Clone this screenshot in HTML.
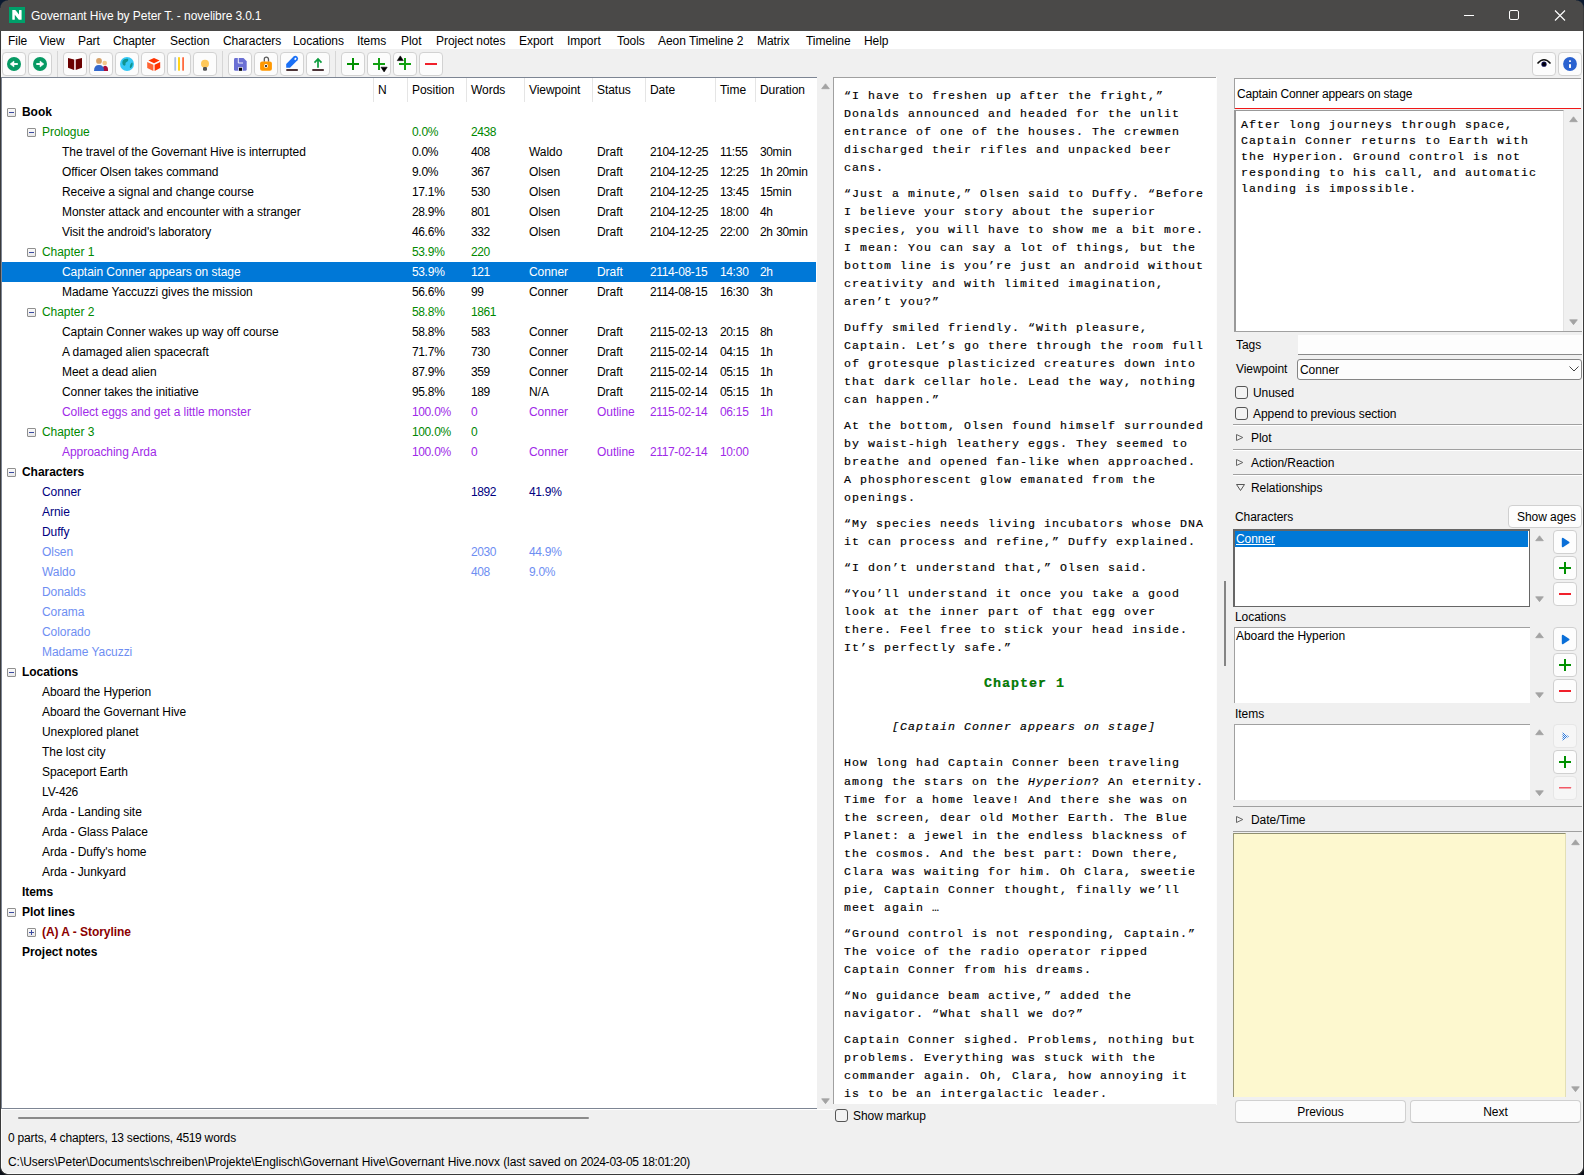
<!DOCTYPE html><html><head><meta charset="utf-8"><style>
*{margin:0;padding:0;box-sizing:border-box}
html,body{width:1584px;height:1175px;overflow:hidden;background:#f0f0f0}
body{position:relative;font-family:"Liberation Sans",sans-serif;font-size:12px;color:#000}
body>div{position:absolute}
.t{white-space:pre;letter-spacing:-0.05px}
.d{letter-spacing:-0.4px}
.m{font-family:"Liberation Mono",monospace;font-size:11.6px;letter-spacing:1.04px;white-space:pre;line-height:18px;-webkit-text-stroke:0.18px #000}
.btn{border:1px solid #d0d0d0;border-radius:4px;background:#fdfdfd}
</style></head><body><div style="left:0px;top:0px;width:1584px;height:31px;background:#4a4948"></div><svg style="position:absolute;left:9px;top:7px" width="16" height="16"><rect width="16" height="16" fill="#00a06a"/><path d="M3.3 3.1Q3.3 2.9 3.8 2.9H5.8Q6.3 2.9 6.6 3.3L10 7.6V3.4Q10 2.9 10.5 2.9H12.1Q12.6 2.9 12.6 3.4V12.2Q12.6 12.7 12.1 12.7H10.2Q9.8 12.7 9.4 12.2L5.8 7.8V12.2Q5.8 12.7 5.3 12.7H3.8Q3.3 12.7 3.3 12.2Z" fill="#fff"/></svg><div class="t" style="left:31px;top:8px;line-height:16px;color:#fff">Governant Hive by Peter T. - novelibre <span class="d">3</span>.<span class="d">0</span>.<span class="d">1</span></div><div style="left:1464px;top:15px;width:10px;height:1px;background:#fff"></div><div style="left:1509px;top:10px;width:10px;height:10px;border:1px solid #fff;border-radius:2px"></div><svg style="position:absolute;left:1554px;top:10px" width="12" height="11"><path d="M1 0.5L11 10.5M11 0.5L1 10.5" stroke="#fff" stroke-width="1.1"/></svg><div style="left:1px;top:31px;width:1582px;height:18px;background:#fff"></div><div class="t" style="left:8px;top:33px;line-height:16px;">File</div><div class="t" style="left:39px;top:33px;line-height:16px;">View</div><div class="t" style="left:78px;top:33px;line-height:16px;">Part</div><div class="t" style="left:113px;top:33px;line-height:16px;">Chapter</div><div class="t" style="left:170px;top:33px;line-height:16px;">Section</div><div class="t" style="left:223px;top:33px;line-height:16px;">Characters</div><div class="t" style="left:293px;top:33px;line-height:16px;">Locations</div><div class="t" style="left:357px;top:33px;line-height:16px;">Items</div><div class="t" style="left:401px;top:33px;line-height:16px;">Plot</div><div class="t" style="left:436px;top:33px;line-height:16px;">Project notes</div><div class="t" style="left:519px;top:33px;line-height:16px;">Export</div><div class="t" style="left:567px;top:33px;line-height:16px;">Import</div><div class="t" style="left:617px;top:33px;line-height:16px;">Tools</div><div class="t" style="left:658px;top:33px;line-height:16px;">Aeon Timeline <span class="d">2</span></div><div class="t" style="left:757px;top:33px;line-height:16px;">Matrix</div><div class="t" style="left:806px;top:33px;line-height:16px;">Timeline</div><div class="t" style="left:864px;top:33px;line-height:16px;">Help</div><div style="left:2px;top:52px;width:24px;height:24px;border:1px solid #d2d2d2;border-radius:4px;background:#fcfcfc"></div><div style="left:28px;top:52px;width:24px;height:24px;border:1px solid #d2d2d2;border-radius:4px;background:#fcfcfc"></div><div style="left:63px;top:52px;width:24px;height:24px;border:1px solid #d2d2d2;border-radius:4px;background:#fcfcfc"></div><div style="left:89px;top:52px;width:24px;height:24px;border:1px solid #d2d2d2;border-radius:4px;background:#fcfcfc"></div><div style="left:115px;top:52px;width:24px;height:24px;border:1px solid #d2d2d2;border-radius:4px;background:#fcfcfc"></div><div style="left:141px;top:52px;width:24px;height:24px;border:1px solid #d2d2d2;border-radius:4px;background:#fcfcfc"></div><div style="left:167px;top:52px;width:24px;height:24px;border:1px solid #d2d2d2;border-radius:4px;background:#fcfcfc"></div><div style="left:193px;top:52px;width:24px;height:24px;border:1px solid #d2d2d2;border-radius:4px;background:#fcfcfc"></div><div style="left:228px;top:52px;width:24px;height:24px;border:1px solid #d2d2d2;border-radius:4px;background:#fcfcfc"></div><div style="left:254px;top:52px;width:24px;height:24px;border:1px solid #d2d2d2;border-radius:4px;background:#fcfcfc"></div><div style="left:280px;top:52px;width:24px;height:24px;border:1px solid #d2d2d2;border-radius:4px;background:#fcfcfc"></div><div style="left:306px;top:52px;width:24px;height:24px;border:1px solid #d2d2d2;border-radius:4px;background:#fcfcfc"></div><div style="left:341px;top:52px;width:24px;height:24px;border:1px solid #d2d2d2;border-radius:4px;background:#fcfcfc"></div><div style="left:367px;top:52px;width:24px;height:24px;border:1px solid #d2d2d2;border-radius:4px;background:#fcfcfc"></div><div style="left:393px;top:52px;width:24px;height:24px;border:1px solid #d2d2d2;border-radius:4px;background:#fcfcfc"></div><div style="left:419px;top:52px;width:24px;height:24px;border:1px solid #d2d2d2;border-radius:4px;background:#fcfcfc"></div><div style="left:1532px;top:52px;width:24px;height:24px;border:1px solid #d2d2d2;border-radius:4px;background:#fcfcfc"></div><div style="left:1558px;top:52px;width:24px;height:24px;border:1px solid #d2d2d2;border-radius:4px;background:#fcfcfc"></div><div style="left:57px;top:51px;width:1px;height:26px;background:#d6d6d6"></div><div style="left:222px;top:51px;width:1px;height:26px;background:#d6d6d6"></div><div style="left:335px;top:51px;width:1px;height:26px;background:#d6d6d6"></div><svg style="position:absolute;left:6px;top:56px;" width="16" height="16" viewBox="0 0 16 16"><circle cx="8" cy="8" r="7" fill="#079a64"/><path d="M4.1 8L8 5V11Z" fill="#fff" stroke="#fff" stroke-width="0.5" stroke-linejoin="round"/><rect x="7.5" y="7" width="4.3" height="2" fill="#f0fff8"/></svg><svg style="position:absolute;left:32px;top:56px;" width="16" height="16" viewBox="0 0 16 16"><circle cx="8" cy="8" r="7" fill="#079a64"/><path d="M11.9 8L8 5V11Z" fill="#fff" stroke="#fff" stroke-width="0.5" stroke-linejoin="round"/><rect x="4.3" y="7" width="4.2" height="2" fill="#f0fff8"/></svg><svg style="position:absolute;left:66px;top:56px;" width="18" height="16" viewBox="0 0 18 16"><path d="M2 2L8 3.5V14L2 11.8Z" fill="#6b0000"/><path d="M9.6 3.5L16 2V11.8L9.6 14Z" fill="#6b0000"/><rect x="8" y="3.5" width="1.6" height="10.5" fill="#e8c8cc"/></svg><svg style="position:absolute;left:92px;top:56px;" width="18" height="16" viewBox="0 0 18 16"><circle cx="7" cy="4.9" r="2.9" fill="#d6a066"/><circle cx="12.7" cy="7" r="2.3" fill="#f3c88a"/><path d="M10.7 14.9V12.2Q11.3 9.8 13.3 9.8Q16 10.2 16 13.6V14.9Z" fill="#a80c38"/><path d="M2 14.9Q2 9 7 9Q12 9 12 14.9Z" fill="#3468cc"/></svg><svg style="position:absolute;left:119px;top:56px;" width="16" height="16" viewBox="0 0 16 16"><circle cx="8" cy="8" r="7" fill="#35c8f5"/><path d="M9 2.8C7 2.3 4.6 3 3.6 5C3 6.5 3.4 8.8 4.8 9.5C6 10 6.8 9 6.5 7.8C6.3 6.8 7.5 6.2 8.4 5.6C9.3 5 9.5 3.5 9 2.8Z" fill="#10948f"/><path d="M13.3 6.6C12.4 6.7 11.5 8.3 11 9.8C10.6 11.2 10.9 12.2 11.6 12.1C12.5 11.8 13.3 10.4 13.6 8.6C13.7 7.6 13.6 6.9 13.3 6.6Z" fill="#10948f"/></svg><svg style="position:absolute;left:146px;top:56px;" width="16" height="16" viewBox="0 0 16 16"><path d="M8 1.9L13.6 4.6L8 7.3L2.4 4.6Z" fill="#ff3300"/><path d="M1.2 5.9L7.4 8.7V14.9L1.2 12Z" fill="#ff6433"/><path d="M8.6 8.7L14.2 5.9V12L8.6 14.9Z" fill="#ff3300"/></svg><svg style="position:absolute;left:172px;top:56px;" width="16" height="16" viewBox="0 0 16 16"><rect x="2.3" y="1" width="1.8" height="13.8" rx="0.9" fill="#a9c0e2"/><rect x="6.1" y="1" width="1.8" height="13.8" rx="0.9" fill="#ffd000"/><rect x="10.2" y="1" width="1.8" height="13.8" rx="0.9" fill="#ff6a3e"/></svg><svg style="position:absolute;left:197px;top:56px;" width="16" height="16" viewBox="0 0 16 16"><circle cx="8" cy="7.8" r="4" fill="#ffc85a"/><rect x="6" y="11" width="4" height="3.8" rx="1.2" fill="#555"/></svg><svg style="position:absolute;left:232px;top:56px;" width="16" height="16" viewBox="0 0 16 16"><path d="M3.4 2H11.5L14.7 5.2V13.4Q14.7 14.8 13.3 14.8H3.4Q2 14.8 2 13.4V3.4Q2 2 3.4 2Z" fill="#6a6fd4"/><path d="M6.3 2V7H11" stroke="#fff" stroke-width="0.9" fill="none"/><rect x="6.4" y="11" width="4.2" height="3.8" fill="#fff"/><rect x="7" y="11.7" width="3" height="3.1" fill="#000"/></svg><svg style="position:absolute;left:258px;top:56px;" width="16" height="16" viewBox="0 0 16 16"><path d="M6.3 5.8V3.3A2.1 2.1 0 0 1 10.5 3.3V5.8" stroke="#5a5a5a" stroke-width="1.3" fill="none"/><rect x="2.1" y="5.4" width="11.8" height="9.3" rx="2" fill="#ff9800"/><circle cx="8" cy="9.9" r="1.9" fill="#fff"/><circle cx="8" cy="9.9" r="1" fill="#000"/></svg><svg style="position:absolute;left:284px;top:55px;" width="16" height="17" viewBox="0 0 16 17"><path d="M2.2 12.7V8.9L9.6 1.5Q11.5 0 13.3 1.8Q15 3.6 13.5 5.3L6 12.7Z" fill="#1a70f6"/><path d="M10.6 4.6L12.1 3.1" stroke="#fff" stroke-width="1.6"/><rect x="2.3" y="14.1" width="11.5" height="1.8" fill="#3a1e22"/></svg><svg style="position:absolute;left:310px;top:55px;" width="16" height="17" viewBox="0 0 16 17"><path d="M8 4V12.7M4.5 7.6L8 4L11.5 7.6" stroke="#0b9b3c" stroke-width="1.7" fill="none"/><rect x="2.3" y="14.1" width="11.5" height="1.8" fill="#3a1e22"/></svg><svg style="position:absolute;left:345px;top:56px;" width="16" height="16" viewBox="0 0 16 16"><rect x="2" y="7" width="12" height="2" fill="#009000"/><rect x="7" y="2" width="2" height="12" fill="#009000"/></svg><svg style="position:absolute;left:371px;top:56px;" width="18" height="17" viewBox="0 0 18 17"><rect x="2" y="7" width="12" height="2" fill="#11a011"/><rect x="7" y="2" width="2" height="12" fill="#11a011"/><path d="M10 11.2H16.2L13.1 15.9Z" fill="#000" stroke="#000" stroke-width="0.6" stroke-linejoin="round"/></svg><svg style="position:absolute;left:396px;top:54px;" width="18" height="18" viewBox="0 0 18 18"><path d="M1.3 6.6H7.3L4.3 1.9Z" fill="#000" stroke="#000" stroke-width="0.6" stroke-linejoin="round"/><rect x="3" y="9" width="12" height="2" fill="#11a011"/><rect x="8" y="4" width="2" height="12" fill="#11a011"/></svg><svg style="position:absolute;left:423px;top:56px;" width="16" height="16" viewBox="0 0 16 16"><rect x="2" y="7" width="12" height="2" fill="#f0202a"/></svg><svg style="position:absolute;left:1536px;top:56px;" width="16" height="16" viewBox="0 0 16 16"><path d="M1.5 7.5Q8 0 14.5 7.5" stroke="#111" stroke-width="1.5" fill="none"/><circle cx="8" cy="8.2" r="2.6" fill="#0a0a50"/><circle cx="8" cy="8.2" r="1.6" fill="#000"/></svg><svg style="position:absolute;left:1562px;top:56px;" width="16" height="16" viewBox="0 0 16 16"><circle cx="8" cy="8" r="6.9" fill="#2a62d0"/><rect x="7" y="4.4" width="2" height="1.5" fill="#fff"/><rect x="7" y="8.2" width="2" height="3.7" fill="#fff"/></svg><div style="left:1px;top:77px;width:816px;height:1032px;background:#fff;border-top:1px solid #7d8593;border-bottom:1px solid #7d8593;border-left:1px solid #7d8593"></div><div style="left:1px;top:1109px;width:832px;height:1px;background:#fff"></div><div style="left:0px;top:31px;width:1px;height:1144px;background:#3a3a3a"></div><div style="left:1px;top:1110px;width:1px;height:63px;background:#fafafa"></div><div style="left:1px;top:31px;width:1px;height:46px;background:#fafafa"></div><div class="t" style="left:378px;top:82px;line-height:16px;">N</div><div class="t" style="left:412px;top:82px;line-height:16px;">Position</div><div class="t" style="left:471px;top:82px;line-height:16px;">Words</div><div class="t" style="left:529px;top:82px;line-height:16px;">Viewpoint</div><div class="t" style="left:597px;top:82px;line-height:16px;">Status</div><div class="t" style="left:650px;top:82px;line-height:16px;">Date</div><div class="t" style="left:720px;top:82px;line-height:16px;">Time</div><div class="t" style="left:760px;top:82px;line-height:16px;">Duration</div><div style="left:373px;top:78px;width:1px;height:24px;background:#e5e5e5"></div><div style="left:407px;top:78px;width:1px;height:24px;background:#e5e5e5"></div><div style="left:466px;top:78px;width:1px;height:24px;background:#e5e5e5"></div><div style="left:524px;top:78px;width:1px;height:24px;background:#e5e5e5"></div><div style="left:592px;top:78px;width:1px;height:24px;background:#e5e5e5"></div><div style="left:645px;top:78px;width:1px;height:24px;background:#e5e5e5"></div><div style="left:715px;top:78px;width:1px;height:24px;background:#e5e5e5"></div><div style="left:755px;top:78px;width:1px;height:24px;background:#e5e5e5"></div><div style="left:7px;top:108px;width:9px;height:9px;border:1px solid #8f8f8f;border-radius:1px;background:linear-gradient(#fafafa,#e8e8e8)"></div><div style="left:9px;top:112px;width:5px;height:1px;background:#3a4aa0"></div><div class="t" style="left:22px;top:104px;line-height:16px;color:#000;font-weight:bold;">Book</div><div style="left:27px;top:128px;width:9px;height:9px;border:1px solid #8f8f8f;border-radius:1px;background:linear-gradient(#fafafa,#e8e8e8)"></div><div style="left:29px;top:132px;width:5px;height:1px;background:#3a4aa0"></div><div class="t" style="left:42px;top:124px;line-height:16px;color:#008800;">Prologue</div><div class="t" style="left:412px;top:124px;line-height:16px;color:#008800"><span class="d">0</span>.<span class="d">0</span>%</div><div class="t" style="left:471px;top:124px;line-height:16px;color:#008800"><span class="d">2438</span></div><div class="t" style="left:62px;top:144px;line-height:16px;color:#000;">The travel of the Governant Hive is interrupted</div><div class="t" style="left:412px;top:144px;line-height:16px;color:#000"><span class="d">0</span>.<span class="d">0</span>%</div><div class="t" style="left:471px;top:144px;line-height:16px;color:#000"><span class="d">408</span></div><div class="t" style="left:529px;top:144px;line-height:16px;color:#000">Waldo</div><div class="t" style="left:597px;top:144px;line-height:16px;color:#000">Draft</div><div class="t" style="left:650px;top:144px;line-height:16px;color:#000"><span class="d">2104</span>-<span class="d">12</span>-<span class="d">25</span></div><div class="t" style="left:720px;top:144px;line-height:16px;color:#000"><span class="d">11</span>:<span class="d">55</span></div><div class="t" style="left:760px;top:144px;line-height:16px;color:#000"><span class="d">30</span>min</div><div class="t" style="left:62px;top:164px;line-height:16px;color:#000;">Officer Olsen takes command</div><div class="t" style="left:412px;top:164px;line-height:16px;color:#000"><span class="d">9</span>.<span class="d">0</span>%</div><div class="t" style="left:471px;top:164px;line-height:16px;color:#000"><span class="d">367</span></div><div class="t" style="left:529px;top:164px;line-height:16px;color:#000">Olsen</div><div class="t" style="left:597px;top:164px;line-height:16px;color:#000">Draft</div><div class="t" style="left:650px;top:164px;line-height:16px;color:#000"><span class="d">2104</span>-<span class="d">12</span>-<span class="d">25</span></div><div class="t" style="left:720px;top:164px;line-height:16px;color:#000"><span class="d">12</span>:<span class="d">25</span></div><div class="t" style="left:760px;top:164px;line-height:16px;color:#000"><span class="d">1</span>h <span class="d">20</span>min</div><div class="t" style="left:62px;top:184px;line-height:16px;color:#000;">Receive a signal and change course</div><div class="t" style="left:412px;top:184px;line-height:16px;color:#000"><span class="d">17</span>.<span class="d">1</span>%</div><div class="t" style="left:471px;top:184px;line-height:16px;color:#000"><span class="d">530</span></div><div class="t" style="left:529px;top:184px;line-height:16px;color:#000">Olsen</div><div class="t" style="left:597px;top:184px;line-height:16px;color:#000">Draft</div><div class="t" style="left:650px;top:184px;line-height:16px;color:#000"><span class="d">2104</span>-<span class="d">12</span>-<span class="d">25</span></div><div class="t" style="left:720px;top:184px;line-height:16px;color:#000"><span class="d">13</span>:<span class="d">45</span></div><div class="t" style="left:760px;top:184px;line-height:16px;color:#000"><span class="d">15</span>min</div><div class="t" style="left:62px;top:204px;line-height:16px;color:#000;">Monster attack and encounter with a stranger</div><div class="t" style="left:412px;top:204px;line-height:16px;color:#000"><span class="d">28</span>.<span class="d">9</span>%</div><div class="t" style="left:471px;top:204px;line-height:16px;color:#000"><span class="d">801</span></div><div class="t" style="left:529px;top:204px;line-height:16px;color:#000">Olsen</div><div class="t" style="left:597px;top:204px;line-height:16px;color:#000">Draft</div><div class="t" style="left:650px;top:204px;line-height:16px;color:#000"><span class="d">2104</span>-<span class="d">12</span>-<span class="d">25</span></div><div class="t" style="left:720px;top:204px;line-height:16px;color:#000"><span class="d">18</span>:<span class="d">00</span></div><div class="t" style="left:760px;top:204px;line-height:16px;color:#000"><span class="d">4</span>h</div><div class="t" style="left:62px;top:224px;line-height:16px;color:#000;">Visit the android's laboratory</div><div class="t" style="left:412px;top:224px;line-height:16px;color:#000"><span class="d">46</span>.<span class="d">6</span>%</div><div class="t" style="left:471px;top:224px;line-height:16px;color:#000"><span class="d">332</span></div><div class="t" style="left:529px;top:224px;line-height:16px;color:#000">Olsen</div><div class="t" style="left:597px;top:224px;line-height:16px;color:#000">Draft</div><div class="t" style="left:650px;top:224px;line-height:16px;color:#000"><span class="d">2104</span>-<span class="d">12</span>-<span class="d">25</span></div><div class="t" style="left:720px;top:224px;line-height:16px;color:#000"><span class="d">22</span>:<span class="d">00</span></div><div class="t" style="left:760px;top:224px;line-height:16px;color:#000"><span class="d">2</span>h <span class="d">30</span>min</div><div style="left:27px;top:248px;width:9px;height:9px;border:1px solid #8f8f8f;border-radius:1px;background:linear-gradient(#fafafa,#e8e8e8)"></div><div style="left:29px;top:252px;width:5px;height:1px;background:#3a4aa0"></div><div class="t" style="left:42px;top:244px;line-height:16px;color:#008800;">Chapter <span class="d">1</span></div><div class="t" style="left:412px;top:244px;line-height:16px;color:#008800"><span class="d">53</span>.<span class="d">9</span>%</div><div class="t" style="left:471px;top:244px;line-height:16px;color:#008800"><span class="d">220</span></div><div style="left:2px;top:262px;width:814px;height:20px;background:#0078d7"></div><div class="t" style="left:62px;top:264px;line-height:16px;color:#fff;">Captain Conner appears on stage</div><div class="t" style="left:412px;top:264px;line-height:16px;color:#fff"><span class="d">53</span>.<span class="d">9</span>%</div><div class="t" style="left:471px;top:264px;line-height:16px;color:#fff"><span class="d">121</span></div><div class="t" style="left:529px;top:264px;line-height:16px;color:#fff">Conner</div><div class="t" style="left:597px;top:264px;line-height:16px;color:#fff">Draft</div><div class="t" style="left:650px;top:264px;line-height:16px;color:#fff"><span class="d">2114</span>-<span class="d">08</span>-<span class="d">15</span></div><div class="t" style="left:720px;top:264px;line-height:16px;color:#fff"><span class="d">14</span>:<span class="d">30</span></div><div class="t" style="left:760px;top:264px;line-height:16px;color:#fff"><span class="d">2</span>h</div><div class="t" style="left:62px;top:284px;line-height:16px;color:#000;">Madame Yaccuzzi gives the mission</div><div class="t" style="left:412px;top:284px;line-height:16px;color:#000"><span class="d">56</span>.<span class="d">6</span>%</div><div class="t" style="left:471px;top:284px;line-height:16px;color:#000"><span class="d">99</span></div><div class="t" style="left:529px;top:284px;line-height:16px;color:#000">Conner</div><div class="t" style="left:597px;top:284px;line-height:16px;color:#000">Draft</div><div class="t" style="left:650px;top:284px;line-height:16px;color:#000"><span class="d">2114</span>-<span class="d">08</span>-<span class="d">15</span></div><div class="t" style="left:720px;top:284px;line-height:16px;color:#000"><span class="d">16</span>:<span class="d">30</span></div><div class="t" style="left:760px;top:284px;line-height:16px;color:#000"><span class="d">3</span>h</div><div style="left:27px;top:308px;width:9px;height:9px;border:1px solid #8f8f8f;border-radius:1px;background:linear-gradient(#fafafa,#e8e8e8)"></div><div style="left:29px;top:312px;width:5px;height:1px;background:#3a4aa0"></div><div class="t" style="left:42px;top:304px;line-height:16px;color:#008800;">Chapter <span class="d">2</span></div><div class="t" style="left:412px;top:304px;line-height:16px;color:#008800"><span class="d">58</span>.<span class="d">8</span>%</div><div class="t" style="left:471px;top:304px;line-height:16px;color:#008800"><span class="d">1861</span></div><div class="t" style="left:62px;top:324px;line-height:16px;color:#000;">Captain Conner wakes up way off course</div><div class="t" style="left:412px;top:324px;line-height:16px;color:#000"><span class="d">58</span>.<span class="d">8</span>%</div><div class="t" style="left:471px;top:324px;line-height:16px;color:#000"><span class="d">583</span></div><div class="t" style="left:529px;top:324px;line-height:16px;color:#000">Conner</div><div class="t" style="left:597px;top:324px;line-height:16px;color:#000">Draft</div><div class="t" style="left:650px;top:324px;line-height:16px;color:#000"><span class="d">2115</span>-<span class="d">02</span>-<span class="d">13</span></div><div class="t" style="left:720px;top:324px;line-height:16px;color:#000"><span class="d">20</span>:<span class="d">15</span></div><div class="t" style="left:760px;top:324px;line-height:16px;color:#000"><span class="d">8</span>h</div><div class="t" style="left:62px;top:344px;line-height:16px;color:#000;">A damaged alien spacecraft</div><div class="t" style="left:412px;top:344px;line-height:16px;color:#000"><span class="d">71</span>.<span class="d">7</span>%</div><div class="t" style="left:471px;top:344px;line-height:16px;color:#000"><span class="d">730</span></div><div class="t" style="left:529px;top:344px;line-height:16px;color:#000">Conner</div><div class="t" style="left:597px;top:344px;line-height:16px;color:#000">Draft</div><div class="t" style="left:650px;top:344px;line-height:16px;color:#000"><span class="d">2115</span>-<span class="d">02</span>-<span class="d">14</span></div><div class="t" style="left:720px;top:344px;line-height:16px;color:#000"><span class="d">04</span>:<span class="d">15</span></div><div class="t" style="left:760px;top:344px;line-height:16px;color:#000"><span class="d">1</span>h</div><div class="t" style="left:62px;top:364px;line-height:16px;color:#000;">Meet a dead alien</div><div class="t" style="left:412px;top:364px;line-height:16px;color:#000"><span class="d">87</span>.<span class="d">9</span>%</div><div class="t" style="left:471px;top:364px;line-height:16px;color:#000"><span class="d">359</span></div><div class="t" style="left:529px;top:364px;line-height:16px;color:#000">Conner</div><div class="t" style="left:597px;top:364px;line-height:16px;color:#000">Draft</div><div class="t" style="left:650px;top:364px;line-height:16px;color:#000"><span class="d">2115</span>-<span class="d">02</span>-<span class="d">14</span></div><div class="t" style="left:720px;top:364px;line-height:16px;color:#000"><span class="d">05</span>:<span class="d">15</span></div><div class="t" style="left:760px;top:364px;line-height:16px;color:#000"><span class="d">1</span>h</div><div class="t" style="left:62px;top:384px;line-height:16px;color:#000;">Conner takes the initiative</div><div class="t" style="left:412px;top:384px;line-height:16px;color:#000"><span class="d">95</span>.<span class="d">8</span>%</div><div class="t" style="left:471px;top:384px;line-height:16px;color:#000"><span class="d">189</span></div><div class="t" style="left:529px;top:384px;line-height:16px;color:#000">N/A</div><div class="t" style="left:597px;top:384px;line-height:16px;color:#000">Draft</div><div class="t" style="left:650px;top:384px;line-height:16px;color:#000"><span class="d">2115</span>-<span class="d">02</span>-<span class="d">14</span></div><div class="t" style="left:720px;top:384px;line-height:16px;color:#000"><span class="d">05</span>:<span class="d">15</span></div><div class="t" style="left:760px;top:384px;line-height:16px;color:#000"><span class="d">1</span>h</div><div class="t" style="left:62px;top:404px;line-height:16px;color:#a02ae8;">Collect eggs and get a little monster</div><div class="t" style="left:412px;top:404px;line-height:16px;color:#a02ae8"><span class="d">100</span>.<span class="d">0</span>%</div><div class="t" style="left:471px;top:404px;line-height:16px;color:#a02ae8"><span class="d">0</span></div><div class="t" style="left:529px;top:404px;line-height:16px;color:#a02ae8">Conner</div><div class="t" style="left:597px;top:404px;line-height:16px;color:#a02ae8">Outline</div><div class="t" style="left:650px;top:404px;line-height:16px;color:#a02ae8"><span class="d">2115</span>-<span class="d">02</span>-<span class="d">14</span></div><div class="t" style="left:720px;top:404px;line-height:16px;color:#a02ae8"><span class="d">06</span>:<span class="d">15</span></div><div class="t" style="left:760px;top:404px;line-height:16px;color:#a02ae8"><span class="d">1</span>h</div><div style="left:27px;top:428px;width:9px;height:9px;border:1px solid #8f8f8f;border-radius:1px;background:linear-gradient(#fafafa,#e8e8e8)"></div><div style="left:29px;top:432px;width:5px;height:1px;background:#3a4aa0"></div><div class="t" style="left:42px;top:424px;line-height:16px;color:#008800;">Chapter <span class="d">3</span></div><div class="t" style="left:412px;top:424px;line-height:16px;color:#008800"><span class="d">100</span>.<span class="d">0</span>%</div><div class="t" style="left:471px;top:424px;line-height:16px;color:#008800"><span class="d">0</span></div><div class="t" style="left:62px;top:444px;line-height:16px;color:#a02ae8;">Approaching Arda</div><div class="t" style="left:412px;top:444px;line-height:16px;color:#a02ae8"><span class="d">100</span>.<span class="d">0</span>%</div><div class="t" style="left:471px;top:444px;line-height:16px;color:#a02ae8"><span class="d">0</span></div><div class="t" style="left:529px;top:444px;line-height:16px;color:#a02ae8">Conner</div><div class="t" style="left:597px;top:444px;line-height:16px;color:#a02ae8">Outline</div><div class="t" style="left:650px;top:444px;line-height:16px;color:#a02ae8"><span class="d">2117</span>-<span class="d">02</span>-<span class="d">14</span></div><div class="t" style="left:720px;top:444px;line-height:16px;color:#a02ae8"><span class="d">10</span>:<span class="d">00</span></div><div style="left:7px;top:468px;width:9px;height:9px;border:1px solid #8f8f8f;border-radius:1px;background:linear-gradient(#fafafa,#e8e8e8)"></div><div style="left:9px;top:472px;width:5px;height:1px;background:#3a4aa0"></div><div class="t" style="left:22px;top:464px;line-height:16px;color:#000;font-weight:bold;">Characters</div><div class="t" style="left:42px;top:484px;line-height:16px;color:#000080;">Conner</div><div class="t" style="left:471px;top:484px;line-height:16px;color:#000080"><span class="d">1892</span></div><div class="t" style="left:529px;top:484px;line-height:16px;color:#000080"><span class="d">41</span>.<span class="d">9</span>%</div><div class="t" style="left:42px;top:504px;line-height:16px;color:#000080;">Arnie</div><div class="t" style="left:42px;top:524px;line-height:16px;color:#000080;">Duffy</div><div class="t" style="left:42px;top:544px;line-height:16px;color:#6e8ef2;">Olsen</div><div class="t" style="left:471px;top:544px;line-height:16px;color:#6e8ef2"><span class="d">2030</span></div><div class="t" style="left:529px;top:544px;line-height:16px;color:#6e8ef2"><span class="d">44</span>.<span class="d">9</span>%</div><div class="t" style="left:42px;top:564px;line-height:16px;color:#6e8ef2;">Waldo</div><div class="t" style="left:471px;top:564px;line-height:16px;color:#6e8ef2"><span class="d">408</span></div><div class="t" style="left:529px;top:564px;line-height:16px;color:#6e8ef2"><span class="d">9</span>.<span class="d">0</span>%</div><div class="t" style="left:42px;top:584px;line-height:16px;color:#6e8ef2;">Donalds</div><div class="t" style="left:42px;top:604px;line-height:16px;color:#6e8ef2;">Corama</div><div class="t" style="left:42px;top:624px;line-height:16px;color:#6e8ef2;">Colorado</div><div class="t" style="left:42px;top:644px;line-height:16px;color:#6e8ef2;">Madame Yacuzzi</div><div style="left:7px;top:668px;width:9px;height:9px;border:1px solid #8f8f8f;border-radius:1px;background:linear-gradient(#fafafa,#e8e8e8)"></div><div style="left:9px;top:672px;width:5px;height:1px;background:#3a4aa0"></div><div class="t" style="left:22px;top:664px;line-height:16px;color:#000;font-weight:bold;">Locations</div><div class="t" style="left:42px;top:684px;line-height:16px;color:#000;">Aboard the Hyperion</div><div class="t" style="left:42px;top:704px;line-height:16px;color:#000;">Aboard the Governant Hive</div><div class="t" style="left:42px;top:724px;line-height:16px;color:#000;">Unexplored planet</div><div class="t" style="left:42px;top:744px;line-height:16px;color:#000;">The lost city</div><div class="t" style="left:42px;top:764px;line-height:16px;color:#000;">Spaceport Earth</div><div class="t" style="left:42px;top:784px;line-height:16px;color:#000;">LV-<span class="d">426</span></div><div class="t" style="left:42px;top:804px;line-height:16px;color:#000;">Arda - Landing site</div><div class="t" style="left:42px;top:824px;line-height:16px;color:#000;">Arda - Glass Palace</div><div class="t" style="left:42px;top:844px;line-height:16px;color:#000;">Arda - Duffy's home</div><div class="t" style="left:42px;top:864px;line-height:16px;color:#000;">Arda - Junkyard</div><div class="t" style="left:22px;top:884px;line-height:16px;color:#000;font-weight:bold;">Items</div><div style="left:7px;top:908px;width:9px;height:9px;border:1px solid #8f8f8f;border-radius:1px;background:linear-gradient(#fafafa,#e8e8e8)"></div><div style="left:9px;top:912px;width:5px;height:1px;background:#3a4aa0"></div><div class="t" style="left:22px;top:904px;line-height:16px;color:#000;font-weight:bold;">Plot lines</div><div style="left:27px;top:928px;width:9px;height:9px;border:1px solid #8f8f8f;border-radius:1px;background:linear-gradient(#fafafa,#e8e8e8)"></div><div style="left:29px;top:932px;width:5px;height:1px;background:#3a4aa0"></div><div style="left:31px;top:930px;width:1px;height:5px;background:#3a4aa0"></div><div class="t" style="left:42px;top:924px;line-height:16px;color:#8b0000;font-weight:bold;">(A) A - Storyline</div><div class="t" style="left:22px;top:944px;line-height:16px;color:#000;font-weight:bold;">Project notes</div><div style="left:18px;top:1117px;width:571px;height:2px;background:#8a8a8a;border-radius:1px"></div><div class="t" style="left:8px;top:1130px;line-height:16px;letter-spacing:-0.12px"><span class="d">0</span> parts, <span class="d">4</span> chapters, <span class="d">13</span> sections, <span class="d">4519</span> words</div><div class="t" style="left:8px;top:1154px;line-height:16px;">C:\Users\Peter\Documents\schreiben\Projekte\Englisch\Governant Hive\Governant Hive.novx (last saved on <span class="d">2024</span>-<span class="d">03</span>-<span class="d">05</span> <span class="d">18</span>:<span class="d">01</span>:<span class="d">20</span>)</div><div style="left:833px;top:77px;width:383px;height:1027px;background:#fff;border-left:1px solid #a0a0a0;border-top:1px solid #a0a0a0"></div><div style="left:1224px;top:581px;width:2px;height:85px;background:#858585"></div><div style="left:1216px;top:77px;width:1px;height:1028px;background:#fdfdfd"></div><div class="m" style="left:844px;top:87px;">“I have to freshen up after the fright,”</div><div class="m" style="left:844px;top:105px;">Donalds announced and headed for the unlit</div><div class="m" style="left:844px;top:123px;">entrance of one of the houses. The crewmen</div><div class="m" style="left:844px;top:141px;">discharged their rifles and unpacked beer</div><div class="m" style="left:844px;top:159px;">cans.</div><div class="m" style="left:844px;top:185px;">“Just a minute,” Olsen said to Duffy. “Before</div><div class="m" style="left:844px;top:203px;">I believe your story about the superior</div><div class="m" style="left:844px;top:221px;">species, you will have to show me a bit more.</div><div class="m" style="left:844px;top:239px;">I mean: You can say a lot of things, but the</div><div class="m" style="left:844px;top:257px;">bottom line is you’re just an android without</div><div class="m" style="left:844px;top:275px;">creativity and with limited imagination,</div><div class="m" style="left:844px;top:293px;">aren’t you?”</div><div class="m" style="left:844px;top:319px;">Duffy smiled friendly. “With pleasure,</div><div class="m" style="left:844px;top:337px;">Captain. Let’s go there through the room full</div><div class="m" style="left:844px;top:355px;">of grotesque plasticized creatures down into</div><div class="m" style="left:844px;top:373px;">that dark cellar hole. Lead the way, nothing</div><div class="m" style="left:844px;top:391px;">can happen.”</div><div class="m" style="left:844px;top:417px;">At the bottom, Olsen found himself surrounded</div><div class="m" style="left:844px;top:435px;">by waist-high leathery eggs. They seemed to</div><div class="m" style="left:844px;top:453px;">breathe and opened fan-like when approached.</div><div class="m" style="left:844px;top:471px;">A phosphorescent glow emanated from the</div><div class="m" style="left:844px;top:489px;">openings.</div><div class="m" style="left:844px;top:515px;">“My species needs living incubators whose DNA</div><div class="m" style="left:844px;top:533px;">it can process and refine,” Duffy explained.</div><div class="m" style="left:844px;top:559px;">“I don’t understand that,” Olsen said.</div><div class="m" style="left:844px;top:585px;">“You’ll understand it once you take a good</div><div class="m" style="left:844px;top:603px;">look at the inner part of that egg over</div><div class="m" style="left:844px;top:621px;">there. Feel free to stick your head inside.</div><div class="m" style="left:844px;top:639px;">It’s perfectly safe.”</div><div class="m" style="left:844px;top:754px;">How long had Captain Conner been traveling</div><div class="m" style="left:844px;top:773px;">among the stars on the <i>Hyperion</i>? An eternity.</div><div class="m" style="left:844px;top:791px;">Time for a home leave! And there she was on</div><div class="m" style="left:844px;top:809px;">the screen, dear old Mother Earth. The Blue</div><div class="m" style="left:844px;top:827px;">Planet: a jewel in the endless blackness of</div><div class="m" style="left:844px;top:845px;">the cosmos. And the best part: Down there,</div><div class="m" style="left:844px;top:863px;">Clara was waiting for him. Oh Clara, sweetie</div><div class="m" style="left:844px;top:881px;">pie, Captain Conner thought, finally we’ll</div><div class="m" style="left:844px;top:899px;">meet again …</div><div class="m" style="left:844px;top:925px;">“Ground control is not responding, Captain.”</div><div class="m" style="left:844px;top:943px;">The voice of the radio operator ripped</div><div class="m" style="left:844px;top:961px;">Captain Conner from his dreams.</div><div class="m" style="left:844px;top:987px;">“No guidance beam active,” added the</div><div class="m" style="left:844px;top:1005px;">navigator. “What shall we do?”</div><div class="m" style="left:844px;top:1031px;">Captain Conner sighed. Problems, nothing but</div><div class="m" style="left:844px;top:1049px;">problems. Everything was stuck with the</div><div class="m" style="left:844px;top:1067px;">commander again. Oh, Clara, how annoying it</div><div class="m" style="left:844px;top:1085px;">is to be an intergalactic leader.</div><div class="m" style="left:984px;top:675px;color:#008800;font-weight:bold;font-size:13.33px;letter-spacing:1px">Chapter 1</div><div class="m" style="left:892px;top:718px;font-style:italic">[Captain Conner appears on stage]</div><div style="left:835px;top:1109px;width:13px;height:13px;border:1px solid #555;border-radius:3px;background:#f3f3f3"></div><div class="t" style="left:853px;top:1108px;line-height:16px;">Show markup</div><div style="left:1234px;top:78px;width:347px;height:31px;background:#fff;border-left:1px solid #a0a0a0;border-top:1px solid #a0a0a0"></div><div class="t" style="left:1237px;top:86px;line-height:16px;letter-spacing:-0.16px">Captain Conner appears on stage</div><div style="left:1235px;top:108px;width:346px;height:1px;background:#f01818"></div><div style="left:1234px;top:110px;width:330px;height:222px;background:#fff;border-left:2px solid #999;border-top:1px solid #999;border-right:1px solid #e3e3e3;border-bottom:1px solid #e3e3e3"></div><div style="left:1234px;top:331px;width:348px;height:1px;background:#a0a0a0"></div><div class="m" style="left:1241px;top:116px;line-height:18px">After long journeys through space,</div><div class="m" style="left:1241px;top:132px;line-height:18px">Captain Conner returns to Earth with</div><div class="m" style="left:1241px;top:148px;line-height:18px">the Hyperion. Ground control is not</div><div class="m" style="left:1241px;top:164px;line-height:18px">responding to his call, and automatic</div><div class="m" style="left:1241px;top:180px;line-height:18px">landing is impossible.</div><svg style="position:absolute;left:1568.5px;top:116px" width="9" height="7"><path d="M4.5 0.8L8.3 5.7H0.7Z" fill="#a3a3a3" stroke="#a3a3a3" stroke-width="0.8" stroke-linejoin="round"/></svg><svg style="position:absolute;left:1568.5px;top:319px" width="9" height="7"><path d="M0.7 0.8H8.3L4.5 5.7Z" fill="#a3a3a3" stroke="#a3a3a3" stroke-width="0.8" stroke-linejoin="round"/></svg><svg style="position:absolute;left:820.5px;top:83px" width="9" height="7"><path d="M4.5 0.8L8.3 5.7H0.7Z" fill="#a3a3a3" stroke="#a3a3a3" stroke-width="0.8" stroke-linejoin="round"/></svg><svg style="position:absolute;left:820.5px;top:1098px" width="9" height="7"><path d="M0.7 0.8H8.3L4.5 5.7Z" fill="#a3a3a3" stroke="#a3a3a3" stroke-width="0.8" stroke-linejoin="round"/></svg><div class="t" style="left:1236px;top:337px;line-height:16px;">Tags</div><div style="left:1298px;top:335px;width:284px;height:20px;background:#fdfdfd;border-bottom:1px solid #8a8a8a"></div><div class="t" style="left:1236px;top:361px;line-height:16px;">Viewpoint</div><div style="left:1297px;top:359px;width:285px;height:21px;background:#fdfdfd;border:1px solid #858585;border-radius:3px"></div><div class="t" style="left:1300px;top:362px;line-height:16px;">Conner</div><svg style="position:absolute;left:1569px;top:366px" width="11" height="7"><path d="M0.5 0.5L5 5L9.5 0.5" stroke="#444" fill="none" stroke-width="1"/></svg><div style="left:1235px;top:386px;width:13px;height:13px;border:1px solid #555;border-radius:3px;background:#f3f3f3"></div><div class="t" style="left:1253px;top:385px;line-height:16px;">Unused</div><div style="left:1235px;top:407px;width:13px;height:13px;border:1px solid #555;border-radius:3px;background:#f3f3f3"></div><div class="t" style="left:1253px;top:406px;line-height:16px;">Append to previous section</div><div style="left:1233px;top:424px;width:349px;height:1px;background:#a0a0a0"></div><div style="left:1233px;top:425px;width:349px;height:1px;background:#fff"></div><div style="left:1233px;top:449px;width:349px;height:1px;background:#a0a0a0"></div><div style="left:1233px;top:450px;width:349px;height:1px;background:#fff"></div><div style="left:1233px;top:474px;width:349px;height:1px;background:#a0a0a0"></div><div style="left:1233px;top:475px;width:349px;height:1px;background:#fff"></div><svg style="position:absolute;left:1236px;top:434px" width="8" height="8"><path d="M0.5 0.5L6.8 3.5L0.5 6.5Z" stroke="#666" fill="none" stroke-width="1"/></svg><div class="t" style="left:1251px;top:430px;line-height:16px;">Plot</div><svg style="position:absolute;left:1236px;top:459px" width="8" height="8"><path d="M0.5 0.5L6.8 3.5L0.5 6.5Z" stroke="#666" fill="none" stroke-width="1"/></svg><div class="t" style="left:1251px;top:455px;line-height:16px;">Action/Reaction</div><svg style="position:absolute;left:1236px;top:484px" width="9" height="8"><path d="M0.5 0.5H8.5L4.5 6.5Z" stroke="#555" fill="none" stroke-width="1"/></svg><div class="t" style="left:1251px;top:480px;line-height:16px;">Relationships</div><div class="t" style="left:1235px;top:509px;line-height:16px;">Characters</div><div style="left:1508px;top:505px;width:74px;height:23px;border:1px solid #d0d0d0;border-radius:4px;background:#fdfdfd"></div><div class="t" style="left:1517px;top:509px;line-height:16px;">Show ages</div><div style="left:1233px;top:529px;width:297px;height:78px;background:#fff;border:2px solid #666;border-right-width:1px;border-bottom-width:1px"></div><div style="left:1235px;top:531px;width:293px;height:16px;background:#0078d7"></div><div class="t" style="left:1236px;top:531px;line-height:16px;color:#fff;text-decoration:underline">Conner</div><svg style="position:absolute;left:1534.5px;top:535px" width="9" height="7"><path d="M4.5 0.8L8.3 5.7H0.7Z" fill="#a3a3a3" stroke="#a3a3a3" stroke-width="0.8" stroke-linejoin="round"/></svg><svg style="position:absolute;left:1534.5px;top:596px" width="9" height="7"><path d="M0.7 0.8H8.3L4.5 5.7Z" fill="#a3a3a3" stroke="#a3a3a3" stroke-width="0.8" stroke-linejoin="round"/></svg><div style="left:1553px;top:530px;width:24px;height:24px;border:1px solid #d0d0d0;border-radius:4px;background:#fdfdfd;"></div><svg style="position:absolute;left:1561px;top:537px;" width="9" height="11"><path d="M1.8 1.8L7.5 5.5L1.8 9.2Z" fill="#0a6fd8" stroke="#0a6fd8" stroke-linejoin="round" stroke-width="2"/></svg><div style="left:1553px;top:556px;width:24px;height:24px;border:1px solid #d0d0d0;border-radius:4px;background:#fdfdfd;"></div><div style="left:1559px;top:567px;width:12px;height:2px;background:#009000"></div><div style="left:1564px;top:562px;width:2px;height:12px;background:#009000"></div><div style="left:1553px;top:582px;width:24px;height:24px;border:1px solid #d0d0d0;border-radius:4px;background:#fdfdfd;"></div><div style="left:1559px;top:593px;width:12px;height:2px;background:#f0202a;"></div><div class="t" style="left:1235px;top:609px;line-height:16px;">Locations</div><div style="left:1234px;top:627px;width:296px;height:76px;background:#fff;border-left:1px solid #a0a0a0;border-top:1px solid #a0a0a0"></div><div class="t" style="left:1236px;top:628px;line-height:16px;">Aboard the Hyperion</div><svg style="position:absolute;left:1534.5px;top:632px" width="9" height="7"><path d="M4.5 0.8L8.3 5.7H0.7Z" fill="#a3a3a3" stroke="#a3a3a3" stroke-width="0.8" stroke-linejoin="round"/></svg><svg style="position:absolute;left:1534.5px;top:692px" width="9" height="7"><path d="M0.7 0.8H8.3L4.5 5.7Z" fill="#a3a3a3" stroke="#a3a3a3" stroke-width="0.8" stroke-linejoin="round"/></svg><div style="left:1553px;top:627px;width:24px;height:24px;border:1px solid #d0d0d0;border-radius:4px;background:#fdfdfd;"></div><svg style="position:absolute;left:1561px;top:634px;" width="9" height="11"><path d="M1.8 1.8L7.5 5.5L1.8 9.2Z" fill="#0a6fd8" stroke="#0a6fd8" stroke-linejoin="round" stroke-width="2"/></svg><div style="left:1553px;top:653px;width:24px;height:24px;border:1px solid #d0d0d0;border-radius:4px;background:#fdfdfd;"></div><div style="left:1559px;top:664px;width:12px;height:2px;background:#009000"></div><div style="left:1564px;top:659px;width:2px;height:12px;background:#009000"></div><div style="left:1553px;top:679px;width:24px;height:24px;border:1px solid #d0d0d0;border-radius:4px;background:#fdfdfd;"></div><div style="left:1559px;top:690px;width:12px;height:2px;background:#f0202a;"></div><div class="t" style="left:1235px;top:706px;line-height:16px;">Items</div><div style="left:1234px;top:724px;width:296px;height:76px;background:#fff;border-left:1px solid #a0a0a0;border-top:1px solid #a0a0a0"></div><svg style="position:absolute;left:1534.5px;top:729px" width="9" height="7"><path d="M4.5 0.8L8.3 5.7H0.7Z" fill="#a3a3a3" stroke="#a3a3a3" stroke-width="0.8" stroke-linejoin="round"/></svg><svg style="position:absolute;left:1534.5px;top:790px" width="9" height="7"><path d="M0.7 0.8H8.3L4.5 5.7Z" fill="#a3a3a3" stroke="#a3a3a3" stroke-width="0.8" stroke-linejoin="round"/></svg><div style="left:1553px;top:724px;width:24px;height:24px;border:1px solid #d0d0d0;border-radius:4px;background:#fdfdfd;border-color:#e6e6e6;background:#f6f6f6"></div><svg style="position:absolute;left:1561px;top:731px" width="9" height="11"><defs><pattern id="chk" width="2" height="2" patternUnits="userSpaceOnUse"><rect width="1" height="1" fill="#2a7ae0"/><rect x="1" y="1" width="1" height="1" fill="#2a7ae0"/></pattern></defs><path d="M1.5 1.2L8 5.5L1.5 9.8Z" fill="url(#chk)"/></svg><div style="left:1553px;top:750px;width:24px;height:24px;border:1px solid #d0d0d0;border-radius:4px;background:#fdfdfd;"></div><div style="left:1559px;top:761px;width:12px;height:2px;background:#009000"></div><div style="left:1564px;top:756px;width:2px;height:12px;background:#009000"></div><div style="left:1553px;top:776px;width:24px;height:24px;border:1px solid #d0d0d0;border-radius:4px;background:#fdfdfd;border-color:#e6e6e6;background:#f6f6f6"></div><svg style="position:absolute;left:1559px;top:786px" width="13" height="4"><path d="M0 1L1 2.5L2 1L3 2.5L4 1L5 2.5L6 1L7 2.5L8 1L9 2.5L10 1L11 2.5L12 1" stroke="#f03040" stroke-width="0.9" fill="none"/></svg><div style="left:1233px;top:806px;width:349px;height:1px;background:#a0a0a0"></div><svg style="position:absolute;left:1236px;top:816px" width="8" height="8"><path d="M0.5 0.5L6.8 3.5L0.5 6.5Z" stroke="#666" fill="none" stroke-width="1"/></svg><div class="t" style="left:1251px;top:812px;line-height:16px;">Date/Time</div><div style="left:1233px;top:831px;width:349px;height:1px;background:#a0a0a0"></div><div style="left:1233px;top:833px;width:333px;height:264px;background:#fdf8cf;border-left:1px solid #9a9878;border-top:1px solid #8f8f70;border-right:1px solid #e3dfb5"></div><svg style="position:absolute;left:1570.5px;top:839px" width="9" height="7"><path d="M4.5 0.8L8.3 5.7H0.7Z" fill="#a3a3a3" stroke="#a3a3a3" stroke-width="0.8" stroke-linejoin="round"/></svg><svg style="position:absolute;left:1570.5px;top:1086px" width="9" height="7"><path d="M0.7 0.8H8.3L4.5 5.7Z" fill="#a3a3a3" stroke="#a3a3a3" stroke-width="0.8" stroke-linejoin="round"/></svg><div style="left:1235px;top:1100px;width:171px;height:23px;border:1px solid #d0d0d0;border-bottom-color:#b5b5b5;border-radius:4px;background:#fbfbfb"></div><div class="t" style="left:1235px;top:1104px;width:171px;text-align:center;line-height:16px">Previous</div><div style="left:1410px;top:1100px;width:171px;height:23px;border:1px solid #d0d0d0;border-bottom-color:#b5b5b5;border-radius:4px;background:#fbfbfb"></div><div class="t" style="left:1410px;top:1104px;width:171px;text-align:center;line-height:16px">Next</div><div style="left:1583px;top:0px;width:1px;height:1175px;background:#3a3a3a"></div><div style="left:1582px;top:31px;width:1px;height:1143px;background:#fafafa"></div><div style="left:0px;top:1174px;width:1584px;height:1px;background:#3a3a3a"></div><div style="left:1px;top:1173px;width:1582px;height:1px;background:#fafafa"></div><div style="left:0;top:1167px;width:8px;height:8px;background:radial-gradient(circle at 8px 0,transparent 6.5px,#3a3a3a 7.2px,#0b0f18 8.5px)"></div><div style="left:1576px;top:1167px;width:8px;height:8px;background:radial-gradient(circle at 0 0,transparent 6.5px,#3a3a3a 7.2px,#0b0f18 8.5px)"></div><div style="left:0;top:0;width:8px;height:8px;background:radial-gradient(circle at 8px 8px,#4a4948 7px,#0b1a30 8.2px)"></div><div style="left:1576px;top:0;width:8px;height:8px;background:radial-gradient(circle at 0 8px,#4a4948 7px,#0b1a30 8.2px)"></div></body></html>
